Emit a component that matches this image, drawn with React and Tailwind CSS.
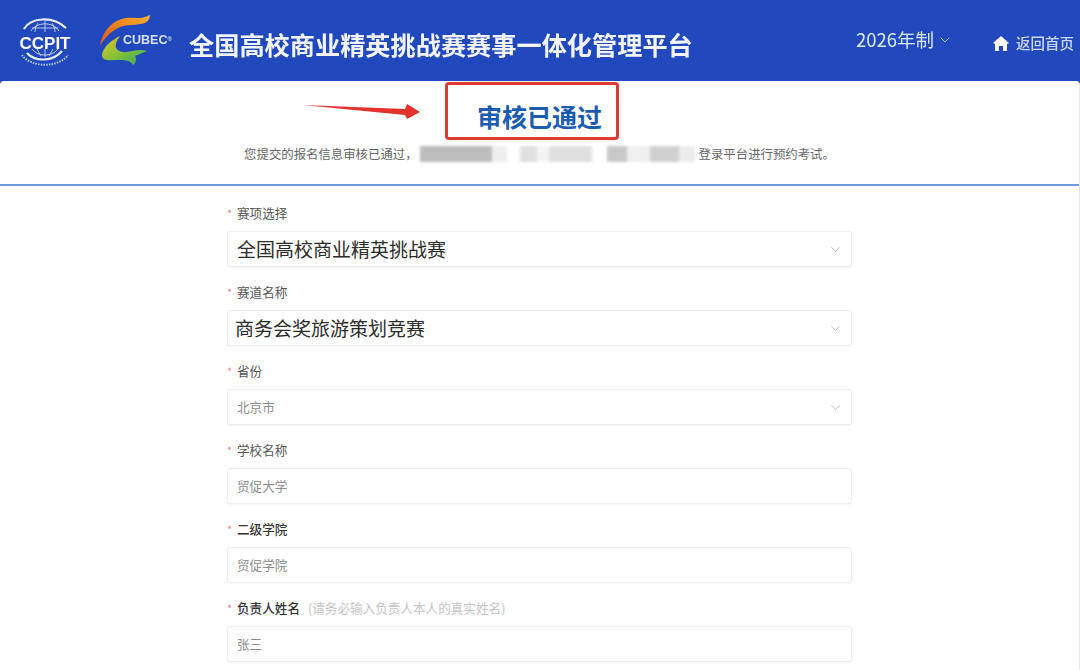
import { ChevronDown } from 'lucide-react'

const cjk = { fontFamily: '"Noto Sans CJK SC", "Noto Sans", sans-serif' }

function CcpitLogo() {
  return (
    <div className="relative w-[56px] h-[50px] shrink-0">
      <svg viewBox="0 0 56 50" className="absolute inset-0 w-full h-full" fill="none">
        <path d="M7 13 C13 2 35 -1 49 12" stroke="#e6edfb" strokeWidth="2.2" />
        <path d="M14 15 C19 6 36 5 42 15" stroke="#c9d6f5" strokeWidth="1" />
        <path d="M28 5 V16 M21 7 C19 10 18 13 18 16 M35 7 C37 10 38 13 38 16 M15 12 H41" stroke="#c9d6f5" strokeWidth="0.9" />
        <path d="M15 33 C21 41 35 41 41 33" stroke="#c9d6f5" strokeWidth="1" />
        <path d="M20 33 L24 40 M28 33 V41 M36 33 L32 40" stroke="#c9d6f5" strokeWidth="0.9" />
        <path d="M10 37 C18 46 36 46 45 35" stroke="#e6edfb" strokeWidth="2.2" />
        <path d="M5 39 C14 52 42 52 51 39" stroke="#b9c9f2" strokeWidth="2" strokeDasharray="1.5 1.2" />
      </svg>
      <span
        className="absolute left-0 right-0 top-[18px] text-center text-white text-[17px] leading-[19px] font-bold"
        style={{ fontFamily: '"Liberation Sans", sans-serif' }}
      >
        CCPIT
      </span>
    </div>
  )
}

function CubecLogo() {
  return (
    <div className="relative w-[74px] h-[54px] shrink-0">
      <svg viewBox="0 0 74 54" className="absolute inset-0 w-full h-full">
        <defs>
          <linearGradient id="cubecTop" x1="0" y1="1" x2="1" y2="0">
            <stop offset="0" stopColor="#d8562a" />
            <stop offset="0.6" stopColor="#ee8a1e" />
            <stop offset="1" stopColor="#f2b33a" />
          </linearGradient>
          <linearGradient id="cubecBottom" x1="0" y1="0" x2="1" y2="1">
            <stop offset="0" stopColor="#e8c32c" />
            <stop offset="0.55" stopColor="#7cc03a" />
            <stop offset="1" stopColor="#2fa36b" />
          </linearGradient>
        </defs>
        <path d="M0 32 C2 18 12 6 26 4 C33 3 40 6 50 1 C50 6 46 10 40 10 C32 12 25 10 18 14 C10 18 4 25 0 32 Z" fill="url(#cubecTop)" />
        <path d="M2 40 C4 32 12 26 20 22 C14 30 14 36 22 38 C30 39 38 34 47 37 C42 39 38 41 35 42 C37 45 36 49 33 51 C31 47 26 46 20 46 C10 46 1 48 2 40 Z" fill="url(#cubecBottom)" />
      </svg>
      <span
        className="absolute left-[23px] top-[19px] text-[#d5e1fb] text-[12.5px] leading-[14px] font-bold"
        style={{ fontFamily: '"Liberation Sans", sans-serif' }}
      >
        CUBEC<sup className="text-[6px]">®</sup>
      </span>
    </div>
  )
}

function HomeIcon() {
  return (
    <svg viewBox="0 0 16 15" className="w-[16px] h-[15px] shrink-0 fill-white">
      <path d="M8 0 L16 7 L14 8 V15 H10 V10 H6 V15 H2 V8 L0 7 Z" />
    </svg>
  )
}

function Label({ text, hint, dark }) {
  return (
    <div className="h-[18px] flex items-center text-[12.6px] leading-[18px] whitespace-nowrap">
      <span className="text-[#e58a8a] w-[10px] text-[11px]">*</span>
      <span className={dark ? 'text-[#333] font-medium' : 'text-[#555]'}>{text}</span>
      {hint && <span className="text-[#c4c4c4] ml-[8px]">{hint}</span>}
    </div>
  )
}

function Field({ label, value, select, big, hint, dark, indent }) {
  return (
    <div className="h-[79px]">
      <Label text={label} hint={hint} dark={dark} />
      <div className="mt-[9px] h-[36px] border border-[#eeeeee] rounded-[3px] shadow-[0_1px_2px_rgba(0,0,0,0.04)] flex items-center justify-between bg-white">
        <span
          className={
            big
              ? `text-[19px] text-[#2b2b2b] ${indent ? 'pl-[7px]' : 'pl-[9px]'}`
              : 'text-[12.6px] text-[#8c8c8c] pl-[9px]'
          }
        >
          {value}
        </span>
        {select && <ChevronDown className="w-[15px] h-[15px] text-[#bdbdbd] mr-[8px]" strokeWidth={1.5} />}
      </div>
    </div>
  )
}

// blurred out part of the notice line
const blurBlocks = [
  ['w-[72px]', 'bg-[#bcbcbc]'],
  ['w-[15px]', 'bg-[#eeeeee]'],
  ['w-[13px]', 'bg-transparent'],
  ['w-[17px]', 'bg-[#e0e0e0]'],
  ['w-[12px]', 'bg-[#f4f4f4]'],
  ['w-[43px]', 'bg-[#e0e0e0]'],
  ['w-[15px]', 'bg-transparent'],
  ['w-[20px]', 'bg-[#c8c8c8]'],
  ['w-[23px]', 'bg-[#f0f0f0]'],
  ['w-[29px]', 'bg-[#d0d0d0]'],
  ['w-[16px]', 'bg-[#ececec]'],
]

export default function App() {
  return (
    <div className="w-[1080px] h-[670px] overflow-hidden bg-[#2148bd]" style={cjk}>
      <div className="blur-[0.4px]">
        <header className="h-[81px] flex items-center pl-[17px] pr-[6px]">
          <CcpitLogo />
          <div className="ml-[27px]">
            <CubecLogo />
          </div>
          <h1 className="ml-[15px] mt-[8px] text-[25.2px] font-bold text-[#f2f5fd] whitespace-nowrap">
            全国高校商业精英挑战赛赛事一体化管理平台
          </h1>
          <div className="ml-auto flex items-center">
            <span className="text-[18.5px] text-[#d6ecff] whitespace-nowrap -mt-[2px]">2026年制</span>
            <ChevronDown className="w-[16px] h-[16px] text-[#a7bdf0] ml-[3px] -mt-[2px]" strokeWidth={1.5} />
            <div className="ml-[40px] mt-[5px] flex items-center">
              <HomeIcon />
              <span className="ml-[7px] text-[14.5px] font-medium text-[#cbd8f7] whitespace-nowrap">返回首页</span>
            </div>
          </div>
        </header>

        <main className="relative bg-white rounded-t-[4px] h-[589px] border-r border-[#e8e8e8]">
          {/* status block */}
          <section className="h-[105px] border-b-2 border-[#6c9be0] flex flex-col items-center">
            <h2 className="mt-[17px] text-[25px] leading-[36px] font-bold text-[#1c5cb0]">审核已通过</h2>
            <div className="mt-[11px] flex items-center text-[12.4px] leading-[18px] text-[#666] whitespace-nowrap">
              <span>您提交的报名信息审核已通过，</span>
              <div className="flex h-[16px] blur-[1.5px] ml-[2px] mr-[4px]">
                {blurBlocks.map(([width, color], i) => (
                  <div key={i} className={`${width} ${color}`} />
                ))}
              </div>
              <span>登录平台进行预约考试。</span>
            </div>
          </section>

          {/* annotation added on the screenshot */}
          <svg viewBox="0 0 120 26" className="absolute left-[302px] top-[16px] w-[120px] h-[26px]">
            <path d="M1 8 L103 12 L105 7 L118 15 L105 22 L103 18 Z" fill="#e5322d" />
          </svg>
          <div className="absolute left-[445px] top-[1px] w-[174px] h-[58px] border-[3px] border-[#dc3b35] rounded-[4px]" />

          <form className="w-[625px] ml-[227px] mt-[18px]">
            <Field label="赛项选择" value="全国高校商业精英挑战赛" select big />
            <Field label="赛道名称" value="商务会奖旅游策划竞赛" select big indent />
            <Field label="省份" value="北京市" select />
            <Field label="学校名称" value="贸促大学" />
            <Field label="二级学院" value="贸促学院" dark />
            <Field label="负责人姓名" value="张三" dark hint="(请务必输入负责人本人的真实姓名)" />
          </form>
        </main>
      </div>
    </div>
  )
}
